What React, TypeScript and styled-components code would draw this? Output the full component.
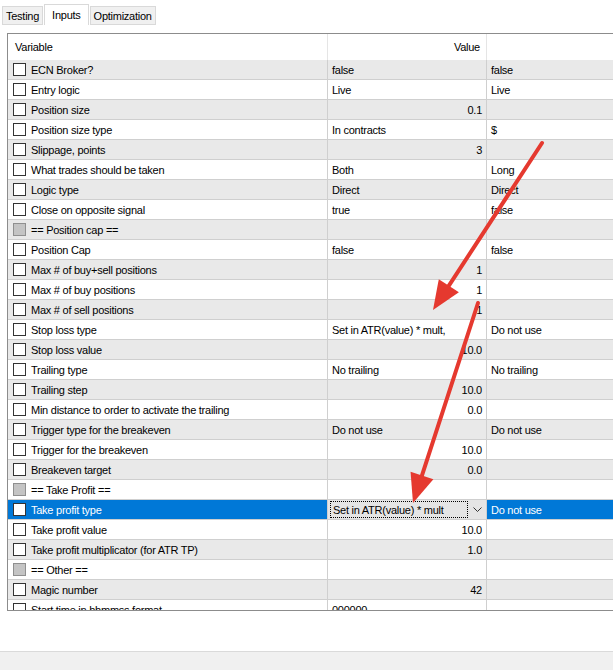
import styled, { createGlobalStyle } from "styled-components";

const GlobalStyle = createGlobalStyle`
  html, body {
    margin: 0;
    padding: 0;
    background: #ffffff;
    overflow: hidden;
  }
  * {
    box-sizing: border-box;
  }
`;

type Row = {
  name: string;
  v?: string;
  v2?: string;
  right?: boolean;
  section?: boolean;
  selected?: boolean;
};

const rows: Row[] = [
  { name: "ECN Broker?", v: "false", v2: "false" },
  { name: "Entry logic", v: "Live", v2: "Live" },
  { name: "Position size", v: "0.1", right: true },
  { name: "Position size type", v: "In contracts", v2: "$" },
  { name: "Slippage, points", v: "3", right: true },
  { name: "What trades should be taken", v: "Both", v2: "Long" },
  { name: "Logic type", v: "Direct", v2: "Direct" },
  { name: "Close on opposite signal", v: "true", v2: "false" },
  { name: "== Position cap ==", section: true },
  { name: "Position Cap", v: "false", v2: "false" },
  { name: "Max # of buy+sell positions", v: "1", right: true },
  { name: "Max # of buy positions", v: "1", right: true },
  { name: "Max # of sell positions", v: "1", right: true },
  { name: "Stop loss type", v: "Set in ATR(value) * mult,", v2: "Do not use" },
  { name: "Stop loss value", v: "10.0", right: true },
  { name: "Trailing type", v: "No trailing", v2: "No trailing" },
  { name: "Trailing step", v: "10.0", right: true },
  { name: "Min distance to order to activate the trailing", v: "0.0", right: true },
  { name: "Trigger type for the breakeven", v: "Do not use", v2: "Do not use" },
  { name: "Trigger for the breakeven", v: "10.0", right: true },
  { name: "Breakeven target", v: "0.0", right: true },
  { name: "== Take Profit ==", section: true },
  { name: "Take profit type", v: "Set in ATR(value) * mult", v2: "Do not use", selected: true },
  { name: "Take profit value", v: "10.0", right: true },
  { name: "Take profit multiplicator (for ATR TP)", v: "1.0", right: true },
  { name: "== Other ==", section: true },
  { name: "Magic number", v: "42", right: true },
  { name: "Start time in hhmmss format", v: "000000" },
];

const Page = styled.div`
  position: relative;
  width: 613px;
  height: 670px;
  display: flex;
  flex-direction: column;
  font-family: "Liberation Sans", Arial, sans-serif;
  font-size: 11px;
  letter-spacing: -0.25px;
  color: #000;
  background: #fff;
  overflow: hidden;
`;

const TabStrip = styled.div`
  height: 25px;
  display: flex;
  align-items: flex-end;
  padding-left: 2px;
`;

const Tab = styled.div<{ $active?: boolean }>`
  height: ${(p) => (p.$active ? 21 : 19)}px;
  padding: 0 ${(p) => (p.$active ? 7 : 3)}px;
  margin-right: 1px;
  display: flex;
  align-items: center;
  background: ${(p) => (p.$active ? "#ffffff" : "#f0f0f0")};
  border: 1px solid #d9d9d9;
  border-bottom: ${(p) => (p.$active ? "none" : "1px solid #d9d9d9")};
  color: #000;
`;

const Panel = styled.div`
  padding: 8px 0 0 7px;
`;

const GridFrame = styled.div`
  width: 720px;
  height: 578px;
  border: 1px solid #8c8c8c;
  overflow: hidden;
  background: #fff;
`;

const Line = styled.div`
  display: grid;
  grid-template-columns: 320px 159px 1fr;
`;

const HeaderRow = styled(Line)`
  height: 26px;
`;

const HeaderCell = styled.div<{ $right?: boolean }>`
  display: flex;
  align-items: center;
  justify-content: ${(p) => (p.$right ? "flex-end" : "flex-start")};
  padding: 0 ${(p) => (p.$right ? 6 : 0)}px 0 ${(p) => (p.$right ? 0 : 7)}px;
  border-right: 1px solid #e5e5e5;
`;

const DataRow = styled(Line)<{ $alt: boolean }>`
  height: 20px;
  background: ${(p) => (p.$alt ? "#e9e9e9" : "#ffffff")};
`;

const Cell = styled.div<{ $right?: boolean; $selected?: boolean }>`
  display: flex;
  align-items: center;
  justify-content: ${(p) => (p.$right ? "flex-end" : "flex-start")};
  padding: 0 4px;
  border-right: 1px solid #cfcfcf;
  border-bottom: 1px solid #cfcfcf;
  white-space: nowrap;
  overflow: hidden;
  background: ${(p) => (p.$selected ? "#0078d7" : "transparent")};
  color: ${(p) => (p.$selected ? "#ffffff" : "#000")};
`;

const NameCell = styled(Cell)`
  padding-left: 5px;
  gap: 5px;
`;

const Check = styled.span<{ $section?: boolean }>`
  width: 13px;
  height: 13px;
  flex: none;
  border: 1px solid ${(p) => (p.$section ? "#8f8f8f" : "#333333")};
  background: ${(p) => (p.$section ? "#c4c4c4" : "#ffffff")};
`;

const Combo = styled.div`
  display: flex;
  align-items: center;
  padding: 0;
  border-bottom: 1px solid #cfcfcf;
  border-right: 1px solid #cfcfcf;
  background: #e5e5e5;
`;

const ComboText = styled.div`
  flex: 1;
  height: 17px;
  margin-left: 2px;
  padding-left: 2px;
  display: flex;
  align-items: center;
  border: 1px dotted #000;
  white-space: nowrap;
  overflow: hidden;
`;

const ComboArrow = styled.div`
  width: 18px;
  display: flex;
  justify-content: center;
  align-items: center;
`;

const Spacer = styled.div`
  flex: 1;
`;

const StatusBar = styled.div`
  height: 19px;
  background: #f0f0f0;
  border-top: 1px solid #dadada;
`;

const Overlay = styled.svg`
  position: absolute;
  left: 0;
  top: 0;
  pointer-events: none;
`;

function Arrow({ x1, y1, x2, y2 }: { x1: number; y1: number; x2: number; y2: number }) {
  const dx = x2 - x1;
  const dy = y2 - y1;
  const len = Math.hypot(dx, dy);
  const ux = dx / len;
  const uy = dy / len;
  const headLen = 29;
  const half = 12;
  const bx = x2 - ux * headLen;
  const by = y2 - uy * headLen;
  const nx = -uy;
  const ny = ux;
  const pts = `${x2},${y2} ${bx + nx * half},${by + ny * half} ${bx - nx * half},${by - ny * half}`;
  return (
    <g>
      <line x1={x1} y1={y1} x2={bx + ux * 2} y2={by + uy * 2} stroke="#e5392f" strokeWidth={4} strokeLinecap="round" />
      <polygon points={pts} fill="#e5392f" />
    </g>
  );
}

function App() {
  return (
    <Page>
      <GlobalStyle />
      <TabStrip>
        <Tab>Testing</Tab>
        <Tab $active>Inputs</Tab>
        <Tab>Optimization</Tab>
      </TabStrip>
      <Panel>
        <GridFrame>
          <HeaderRow>
            <HeaderCell>Variable</HeaderCell>
            <HeaderCell $right>Value</HeaderCell>
            <HeaderCell />
          </HeaderRow>
          {rows.map((r, i) => (
            <DataRow key={i} $alt={i % 2 === 0}>
              <NameCell $selected={r.selected}>
                <Check $section={r.section} />
                {r.name}
              </NameCell>
              {r.selected ? (
                <Combo>
                  <ComboText>{r.v}</ComboText>
                  <ComboArrow>
                    <svg width="9" height="6" viewBox="0 0 9 6">
                      <polyline points="0.5,0.5 4.5,4.5 8.5,0.5" fill="none" stroke="#333" strokeWidth="1" />
                    </svg>
                  </ComboArrow>
                </Combo>
              ) : (
                <Cell $right={r.right}>{r.v}</Cell>
              )}
              <Cell $selected={r.selected}>{r.v2}</Cell>
            </DataRow>
          ))}
        </GridFrame>
      </Panel>
      <Spacer />
      <StatusBar />
      <Overlay width="613" height="670" viewBox="0 0 613 670">
        <Arrow x1={542} y1={143} x2={433} y2={310} />
        <Arrow x1={478} y1={303} x2={413} y2={503} />
      </Overlay>
    </Page>
  );
}

export default App;
